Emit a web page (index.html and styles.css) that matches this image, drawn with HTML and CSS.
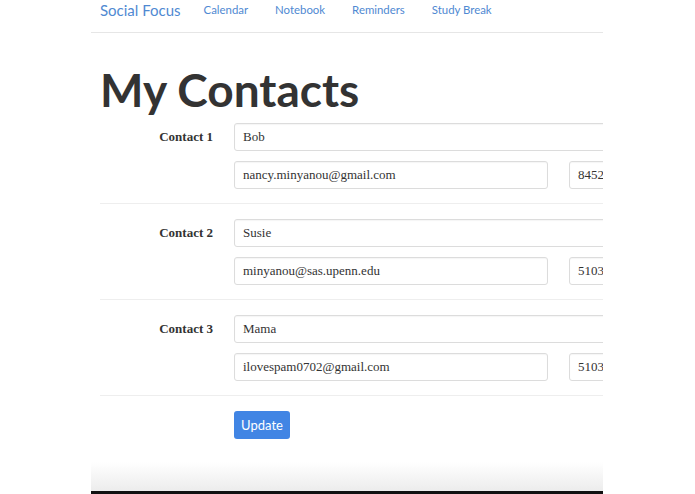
FILE: index.html
```html
<!DOCTYPE html>
<html>
<head>
<meta charset="utf-8">
<link rel="stylesheet" href="styles.css">
</head>
<body>
<div class="page">
  <nav class="nav">
    <a class="brand">Social Focus</a>
    <a class="link">Calendar</a>
    <a class="link">Notebook</a>
    <a class="link">Reminders</a>
    <a class="link">Study Break</a>
  </nav>
  <main class="content">
    <h1 class="title">My Contacts</h1>
    <div class="row">
      <div class="label">Contact 1</div>
      <div class="fields">
        <div class="field name">Bob</div>
        <div class="pair">
          <div class="field email">nancy.minyanou@gmail.com</div>
          <div class="field phone">8452407711</div>
        </div>
      </div>
    </div>
    <div class="row">
      <div class="label">Contact 2</div>
      <div class="fields">
        <div class="field name">Susie</div>
        <div class="pair">
          <div class="field email">minyanou@sas.upenn.edu</div>
          <div class="field phone">5103715588</div>
        </div>
      </div>
    </div>
    <div class="row">
      <div class="label">Contact 3</div>
      <div class="fields">
        <div class="field name">Mama</div>
        <div class="pair">
          <div class="field email">ilovespam0702@gmail.com</div>
          <div class="field phone">5103715588</div>
        </div>
      </div>
    </div>
    <div class="actions">
      <button class="btn">Update</button>
    </div>
  </main>
  <div class="shade"></div>
</div>
</body>
</html>
```
FILE: styles.css
```css
html, body {
  margin: 0;
  padding: 0;
  background: #fff;
}
.page {
  width: 512px;
  height: 494px;
  margin-left: 91px;
  overflow: hidden;
  display: flex;
  flex-direction: column;
}
.nav {
  height: 33px;
  box-sizing: border-box;
  border-bottom: 1px solid #e6e6e6;
  display: flex;
  align-items: flex-start;
  padding: 0 0 0 9px;
  font-family: "Lato", "Open Sans", sans-serif;
  color: #4f89d2;
  flex-shrink: 0;
}
.brand {
  font-size: 15px;
  line-height: 20px;
  margin-right: 23px;
}
.link {
  font-size: 11.4px;
  line-height: 20px;
  margin-right: 27px;
}
.content {
  padding-left: 9px;
  width: 720px;
}
.title {
  margin: 32px 0 8px 0;
  font-family: "Lato", "Open Sans", sans-serif;
  font-weight: 700;
  font-size: 46px;
  line-height: 50px;
  color: #333;
}
.row {
  display: flex;
  padding: 15px 0 14px;
  border-bottom: 1px solid #eee;
}
.title + .row {
  padding-top: 0;
}
.label {
  width: 113px;
  text-align: right;
  font-family: "Liberation Serif", serif;
  font-weight: 700;
  font-size: 13px;
  color: #333;
  line-height: 28px;
  padding-right: 21px;
  flex-shrink: 0;
}
.fields {
  display: flex;
  flex-direction: column;
  gap: 10px;
}
.pair {
  display: flex;
  gap: 21px;
}
.field {
  height: 28px;
  box-sizing: border-box;
  border: 1px solid #dcdcdc;
  border-radius: 3px;
  padding: 0 8px;
  font-family: "Liberation Serif", serif;
  font-size: 13px;
  line-height: 26px;
  color: #333;
  background: #fff;
  box-shadow: inset 0 1px 1px rgba(0,0,0,0.04);
}
.name {
  width: 470px;
}
.email {
  width: 314px;
}
.phone {
  width: 135px;
}
.actions {
  padding: 15px 0 0 134px;
}
.btn {
  width: 56px;
  height: 28px;
  border: none;
  border-radius: 3px;
  background: #4185e4;
  color: #fff;
  font-family: "Lato", "Open Sans", sans-serif;
  font-size: 13px;
  padding: 0;
}
.shade {
  margin-top: auto;
  height: 29px;
  background: linear-gradient(to bottom, #ffffff, #ececec);
  border-bottom: 3px solid #111;
  flex-shrink: 0;
}
```
